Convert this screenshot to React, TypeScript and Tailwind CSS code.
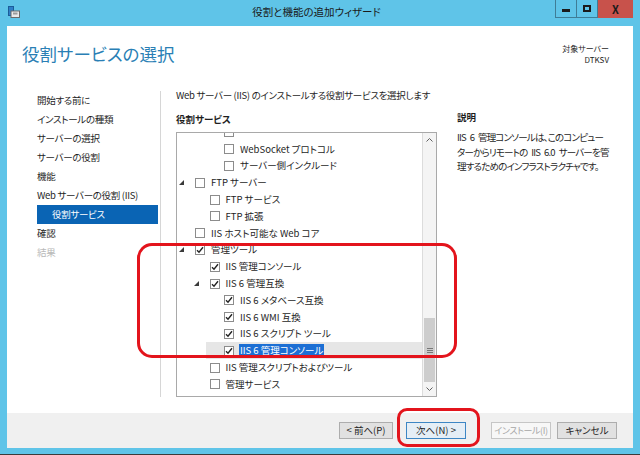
import React from 'react';

type Row = {
  label: string;
  level: number;
  expander?: boolean;
  checked?: boolean;
  selected?: boolean;
};

const rows: Row[] = [
  { label: '', level: 2 },
  { label: 'WebSocket プロトコル', level: 2 },
  { label: 'サーバー側インクルード', level: 2 },
  { label: 'FTP サーバー', level: 0, expander: true },
  { label: 'FTP サービス', level: 1 },
  { label: 'FTP 拡張', level: 1 },
  { label: 'IIS ホスト可能な Web コア', level: 0 },
  { label: '管理ツール', level: 0, expander: true, checked: true },
  { label: 'IIS 管理コンソール', level: 1, checked: true },
  { label: 'IIS 6 管理互換', level: 1, expander: true, checked: true },
  { label: 'IIS 6 メタベース互換', level: 2, checked: true },
  { label: 'IIS 6 WMI 互換', level: 2, checked: true },
  { label: 'IIS 6 スクリプト ツール', level: 2, checked: true },
  { label: 'IIS 6 管理コンソール', level: 2, checked: true, selected: true },
  { label: 'IIS 管理スクリプトおよびツール', level: 1 },
  { label: '管理サービス', level: 1 },
];

const steps = [
  { label: '開始する前に' },
  { label: 'インストールの種類' },
  { label: 'サーバーの選択' },
  { label: 'サーバーの役割' },
  { label: '機能' },
  { label: 'Web サーバーの役割 (IIS)' },
  { label: '役割サービス', active: true },
  { label: '確認' },
  { label: '結果', disabled: true },
];

const indents = ['pl-0', 'pl-[14.5px]', 'pl-[29px]'];

const Checkbox = ({ checked }: { checked?: boolean }) => (
  <span className="w-[10px] h-[10px] shrink-0 border border-[#8c8c8c] bg-white flex items-center justify-center">
    {checked && (
      <svg width="8" height="8" viewBox="0 0 8 8">
        <path d="M1 4.2 L3 6.2 L7 1.2" fill="none" stroke="#222" strokeWidth="1.4" />
      </svg>
    )}
  </span>
);

const Expander = () => (
  <svg width="5" height="5" viewBox="0 0 5 5">
    <polygon points="5,0 5,5 0,5" fill="#3a3a3a" />
  </svg>
);

const TreeRow = ({ row }: { row: Row }) => (
  <div className={`h-[16.8px] flex ${indents[row.level]}`}>
    <div className={`flex-1 flex items-center ${row.selected ? 'bg-[#e6e6e6]' : ''}`}>
      <span className="w-[18px] shrink-0 pl-[2px] flex items-center">{row.expander && <Expander />}</span>
      <Checkbox checked={row.checked} />
      <span
        className={`ml-[5px] px-[1px] leading-[13px] whitespace-nowrap ${
          row.selected ? 'bg-[#1c6fd4] text-white' : 'text-[#1e1e1e]'
        }`}
      >
        {row.label}
      </span>
    </div>
  </div>
);

export default function App() {
  return (
    <div className="w-[640px] h-[455px] bg-[#5fc4e8] flex flex-col relative font-['Noto_Sans_CJK_JP',sans-serif] [font-feature-settings:'palt'] text-[9.5px] text-[#1e1e1e] border-b border-[#3b3b3b] overflow-hidden">
      {/* title bar */}
      <div className="h-[26px] flex shrink-0">
        <div className="w-[78px] pl-[8px] pt-[6px]">
          <svg width="12" height="12" viewBox="0 0 12 12">
            <rect x="0.5" y="0.5" width="5" height="9" fill="#2d7fc8" stroke="#1b5c99" strokeWidth="1" />
            <rect x="3" y="5" width="8.5" height="6.5" fill="#e8e8e8" stroke="#6a6a6a" strokeWidth="1" />
            <rect x="5" y="6.5" width="4.5" height="2" fill="#9a9a9a" />
          </svg>
        </div>
        <div className="flex-1 text-center pt-[5px] text-[10.5px] leading-[14px] text-[#1a1a1a]">
          役割と機能の追加ウィザード
        </div>
        <div className="w-[85px] flex items-start pr-[7px]">
          <div className="w-[22px] h-[18px] border border-[#3f7d96] border-t-0 flex items-center justify-center">
            <span className="w-[8px] h-[3px] bg-[#1b1b1b] mt-[3px]" />
          </div>
          <div className="w-[21px] h-[18px] border border-[#3f7d96] border-t-0 border-l-0 flex items-center justify-center">
            <span className="w-[8px] h-[7px] border-2 border-[#1b1b1b]" />
          </div>
          <div className="flex-1 h-[18px] bg-[#c8524b] flex items-center justify-center text-[11px] font-bold leading-none text-[#1b1b1b]">
            X
          </div>
        </div>
      </div>

      {/* client area */}
      <div className="flex-1 mx-[7px] bg-white flex flex-col">
        {/* header */}
        <div className="h-[62px] shrink-0 flex justify-between pl-[15px] pr-[24px]">
          <div className="pt-[15px] text-[17.5px] leading-[26px] text-[#2a7fb5]">役割サービスの選択</div>
          <div className="pt-[17px] text-right text-[8px] leading-[11px] text-[#1e1e1e]">
            <div>対象サーバー</div>
            <div>DTKSV</div>
          </div>
        </div>

        {/* body */}
        <div className="flex-1 flex">
          <div className="w-[154px] shrink-0 pl-[30px] pr-[2px] pt-[3px] pb-[16px]">
            <div className="h-full border-r border-[#d6d6d6] -mr-[2px] pr-[2px]">
              {steps.map((s) => (
                <div
                  key={s.label}
                  className={`h-[19px] flex items-center leading-[13px] whitespace-nowrap tracking-[-0.3px] ${
                    s.active ? 'bg-[#0a64b4] text-white pl-[15px]' : s.disabled ? 'text-[#b8b8b8]' : 'text-[#1e1e1e]'
                  }`}
                >
                  {s.label}
                </div>
              ))}
            </div>
          </div>

          <div className="flex-1 pl-[15px] pr-[18px]">
            <div className="h-[14px] leading-[14px] tracking-[-0.3px] whitespace-nowrap">
              Web サーバー (IIS) のインストールする役割サービスを選択します
            </div>
            <div className="flex gap-[20px] mt-[10px]">
              <div className="w-[261px] shrink-0">
                <div className="h-[14px] leading-[14px] font-bold">役割サービス</div>
                <div className="mt-[6px] h-[265px] border border-[#a9a9a9] flex overflow-hidden">
                  <div className="flex-1 overflow-hidden">
                    <div className="-mt-[9px]">
                      {rows.map((r, i) => (
                        <TreeRow key={i} row={r} />
                      ))}
                    </div>
                  </div>
                  <div className="w-[14px] shrink-0 border-l border-[#dcdcdc] bg-[#f4f4f4] flex flex-col">
                    <div className="h-[14px] flex items-center justify-center">
                      <svg width="7" height="4" viewBox="0 0 7 4">
                        <path d="M0.5 3.5 L3.5 0.5 L6.5 3.5" fill="none" stroke="#606060" strokeWidth="1" />
                      </svg>
                    </div>
                    <div className="flex-1" />
                    <div className="h-[64px] mx-[1px] bg-[#cdcdcd] flex items-center justify-center">
                      <div className="w-[6px] flex flex-col gap-[1px]">
                        <span className="h-px bg-[#777]" />
                        <span className="h-px bg-[#777]" />
                        <span className="h-px bg-[#777]" />
                      </div>
                    </div>
                    <div className="h-[14px] flex items-center justify-center">
                      <svg width="7" height="4" viewBox="0 0 7 4">
                        <path d="M0.5 0.5 L3.5 3.5 L6.5 0.5" fill="none" stroke="#606060" strokeWidth="1" />
                      </svg>
                    </div>
                  </div>
                </div>
              </div>
              <div className="flex-1">
                <div className="h-[14px] leading-[14px] font-bold -mt-[2px]">説明</div>
                <div className="mt-[6px] leading-[14.5px] whitespace-nowrap tracking-[-0.8px] [word-spacing:2.5px]">
                  IIS 6 管理コンソールは、このコンピュー
                  <br />
                  ターからリモートの IIS 6.0 サーバーを管
                  <br />
                  理するためのインフラストラクチャです。
                </div>
              </div>
            </div>
          </div>
        </div>

        {/* footer */}
        <div className="h-[35px] shrink-0 bg-[#f0f0f0] flex items-center justify-end pr-[16px] whitespace-nowrap">
          <button className="w-[54px] h-[17px] bg-[#e1e1e1] border border-[#adadad] leading-[13px] text-[#1e1e1e]">
            &lt; 前へ(P)
          </button>
          <button className="ml-[13px] w-[60px] h-[17px] bg-[#e5eef6] border border-[#3d86c4] leading-[13px] text-[#1e1e1e]">
            次へ(N) &gt;
          </button>
          <button className="ml-[25px] w-[60px] h-[17px] bg-[#f7f7f7] border border-[#c6c6c6] leading-[13px] text-[9px] text-[#a6a6a6] tracking-[-0.4px] px-0">
            インストール(I)
          </button>
          <button className="ml-[6px] w-[60px] h-[17px] bg-[#e1e1e1] border border-[#adadad] leading-[13px] text-[#1e1e1e]">
            キャンセル
          </button>
        </div>
      </div>
      <div className="h-[6px] shrink-0" />

      {/* red annotations */}
      <div className="absolute left-[137px] top-[243px] w-[320px] h-[115px] border-[3px] border-[#e3141c] rounded-[15px] pointer-events-none" />
      <div className="absolute left-[397px] top-[408px] w-[83px] h-[39px] border-[3px] border-[#e3141c] rounded-[10px] pointer-events-none" />
    </div>
  );
}
